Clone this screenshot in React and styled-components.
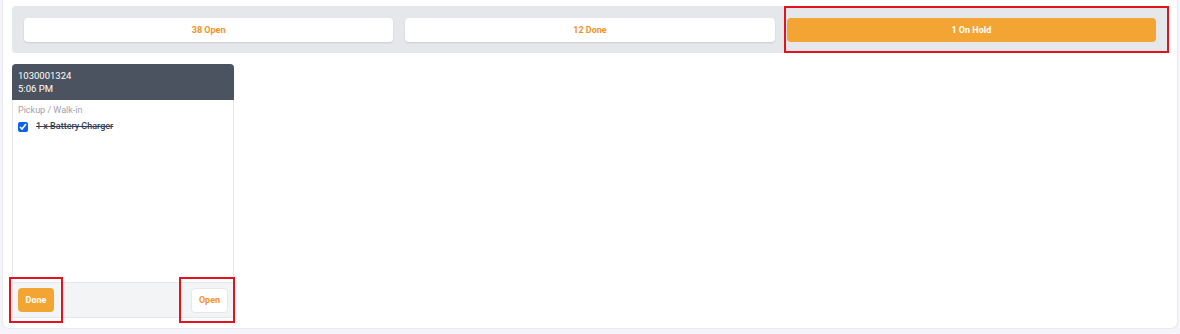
import React from 'react';
import styled,{createGlobalStyle,css} from 'styled-components';

const Global=createGlobalStyle`
  html,body{margin:0;padding:0;background:#f4f4fa;}
  body{font-family:Roboto,"Liberation Sans",Arial,sans-serif;font-size:9px;color:#374151;}
  *{box-sizing:border-box;}
`;

const Page=styled.div`
  padding:0 2px 5px 2px;
`;

const Panel=styled.div`
  background:#fff;
  border:1px solid #e9e9f2;
  border-top:none;
  border-radius:0 0 7px 7px;
  padding:6px 9px 10px 9px;
  display:flex;
  flex-direction:column;
  gap:11px;
`;

const TabBar=styled.div`
  background:#e5e7eb;
  border-radius:4px;
  padding:12px 12px 11px 12px;
  display:grid;
  grid-template-columns:repeat(3,1fr);
  gap:12px;
`;

// red annotation frame drawn over the marked control
const Marked=styled.div`
  position:relative;
  display:${p=>p.$block?'block':'inline-block'};
  &::after{
    content:'';
    position:absolute;
    top:${p=>p.$t}px;
    right:${p=>p.$r}px;
    bottom:${p=>p.$b}px;
    left:${p=>p.$l}px;
    border:2px solid #e3121d;
    pointer-events:none;
  }
`;

const Tab=styled.button`
  width:100%;
  height:24px;
  border:none;
  border-radius:4px;
  font-family:inherit;
  font-size:9px;
  font-weight:700;
  cursor:pointer;
  ${p=>p.$active?css`
    background:#f3a533;
    color:#fff;
  `:css`
    background:#fff;
    color:#f39325;
    box-shadow:0 1px 2px rgba(0,0,0,.12);
  `}
`;

const Cards=styled.div`
  display:flex;
  gap:12px;
  align-items:flex-start;
`;

const Card=styled.div`
  width:222px;
  height:254px;
  display:flex;
  flex-direction:column;
  border-radius:4px 4px 0 0;
`;

const CardHead=styled.div`
  background:#4b5361;
  color:#fff;
  border-radius:4px 4px 0 0;
  padding:5px 6px;
  line-height:13px;
  font-size:9.5px;
`;

const CardBody=styled.div`
  flex:1;
  border:1px solid #e5e7eb;
  border-top:none;
  border-bottom:none;
  padding:4px 5px;
`;

const Source=styled.div`
  color:#9ca3af;
  line-height:13px;
`;

const ItemRow=styled.label`
  display:flex;
  align-items:center;
  gap:8px;
  margin-top:3px;
  line-height:13px;
`;

const Check=styled.input`
  width:10px;
  height:10px;
  margin:0;
  accent-color:#0b63e5;
`;

const ItemName=styled.span`
  text-decoration:line-through;
  color:#374151;
  font-weight:500;
`;

const CardFoot=styled.div`
  height:36px;
  background:#f3f4f6;
  border:1px solid #e5e7eb;
  display:flex;
  align-items:center;
  justify-content:space-between;
  padding:0 5px;
`;

const SmallButton=styled.button`
  width:${p=>p.$primary?36:37}px;
  height:${p=>p.$primary?24:25}px;
  padding:0;
  border-radius:4px;
  font-family:inherit;
  font-size:9px;
  font-weight:700;
  cursor:pointer;
  ${p=>p.$primary?css`
    background:#f3a533;
    color:#fff;
    border:none;
  `:css`
    background:#fff;
    color:#f39325;
    border:1px solid #e5e7eb;
  `}
`;

const tabs=[
  {label:'38 Open'},
  {label:'12 Done'},
  {label:'1 On Hold',active:true},
];

export default function App(){
  return (
    <Page>
      <Global/>
      <Panel>
        <TabBar>
          {tabs.map(t=>t.active?(
            <Marked key={t.label} $block $t={-12} $r={-13} $b={-11} $l={-3}>
              <Tab $active>{t.label}</Tab>
            </Marked>
          ):(
            <Tab key={t.label}>{t.label}</Tab>
          ))}
        </TabBar>
        <Cards>
          <Card>
            <CardHead>
              <div>1030001324</div>
              <div>5:06 PM</div>
            </CardHead>
            <CardBody>
              <Source>Pickup / Walk-in</Source>
              <ItemRow>
                <Check type="checkbox" defaultChecked/>
                <ItemName>1 x Battery Charger</ItemName>
              </ItemRow>
            </CardBody>
            <CardFoot>
              <Marked $t={-11} $r={-9} $b={-11} $l={-9}>
                <SmallButton $primary>Done</SmallButton>
              </Marked>
              <Marked $t={-11} $r={-7} $b={-10} $l={-12}>
                <SmallButton>Open</SmallButton>
              </Marked>
            </CardFoot>
          </Card>
        </Cards>
      </Panel>
    </Page>
  );
}
